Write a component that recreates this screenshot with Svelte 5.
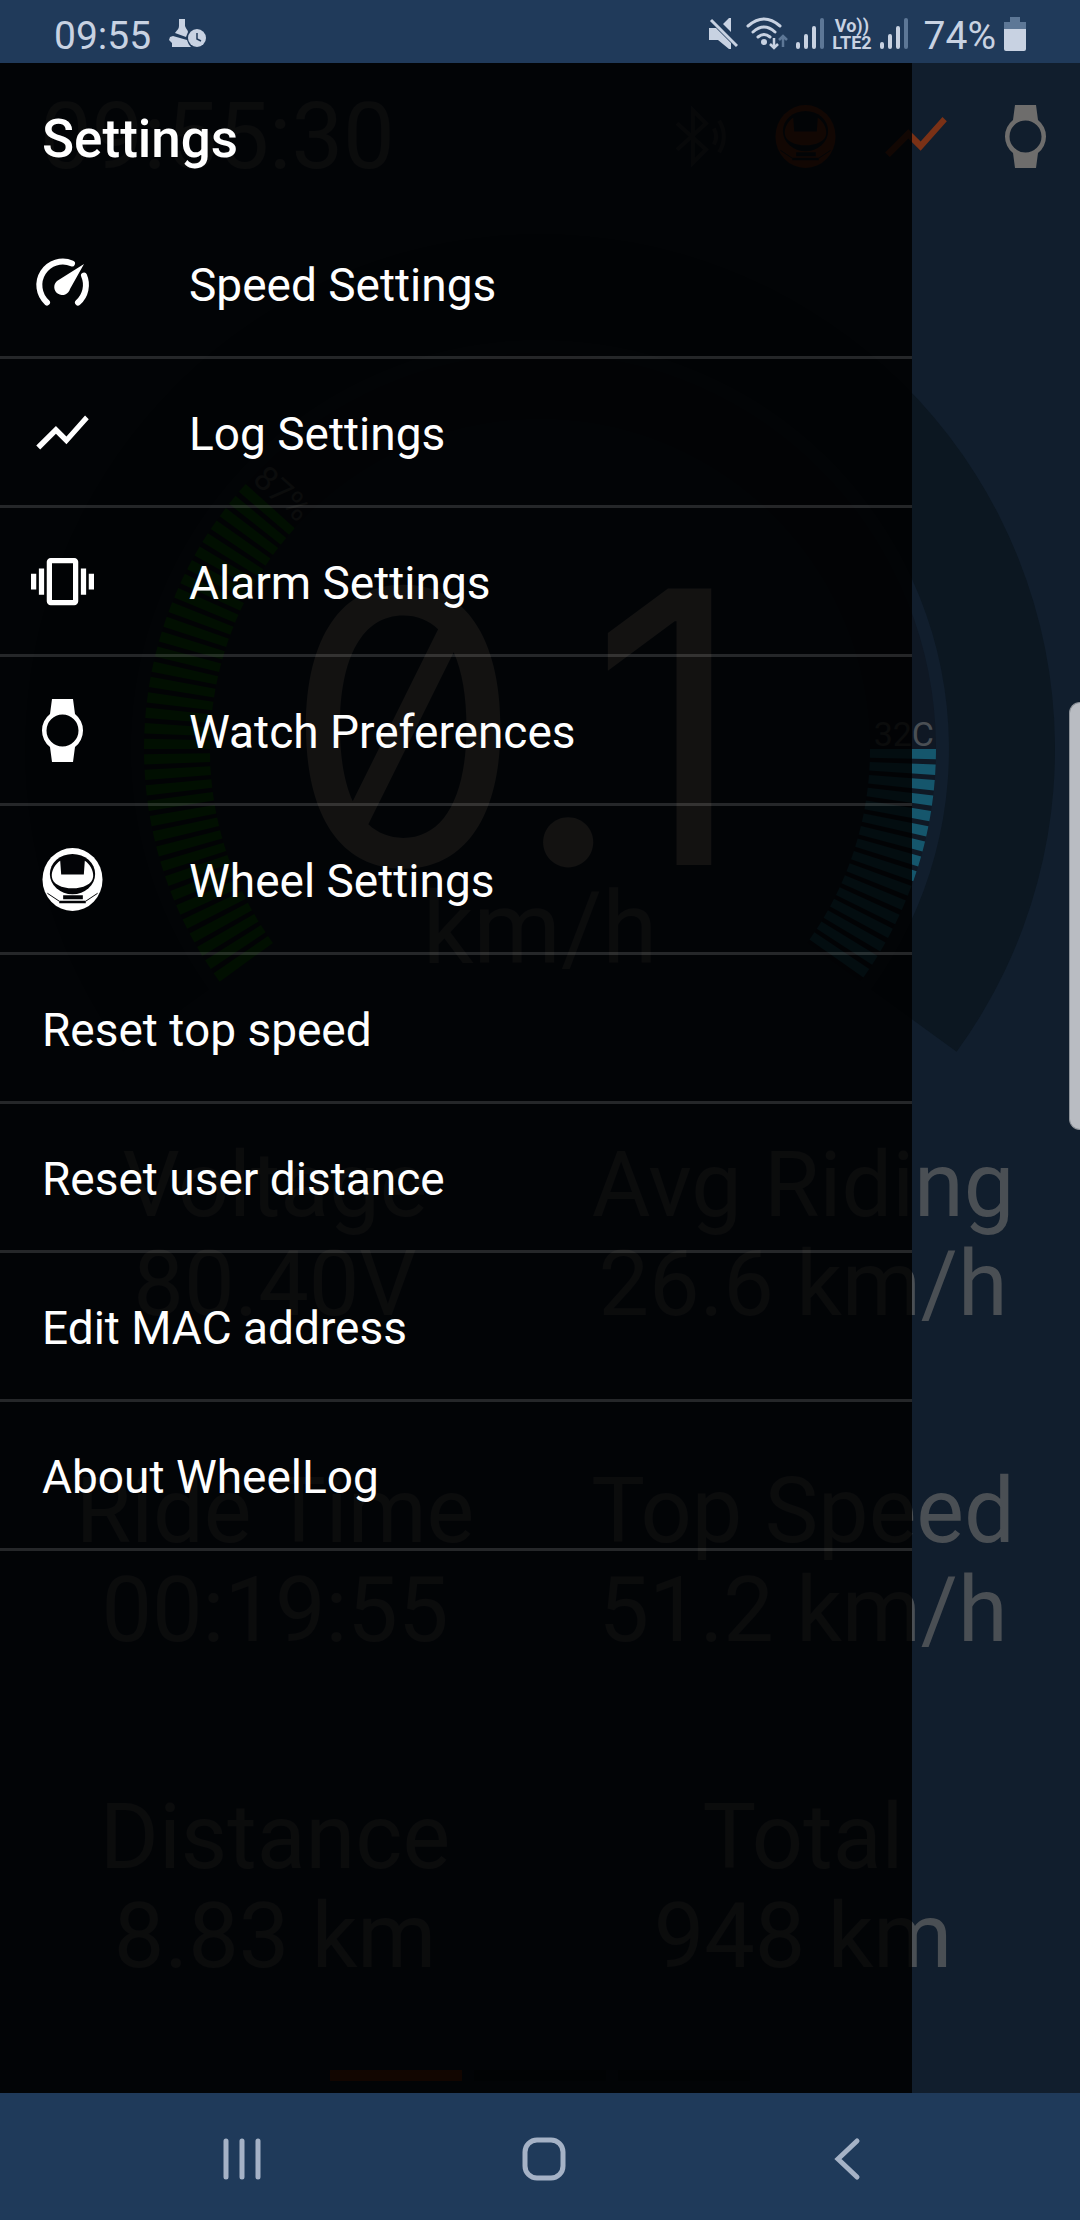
<script lang="ts">
    type IconName = 'speed' | 'chart' | 'vibrate' | 'watch' | 'wheel'

    interface MenuItem {
        label: string
        icon?: IconName
    }

    const menu: MenuItem[] = [
        { label: 'Speed Settings', icon: 'speed' },
        { label: 'Log Settings', icon: 'chart' },
        { label: 'Alarm Settings', icon: 'vibrate' },
        { label: 'Watch Preferences', icon: 'watch' },
        { label: 'Wheel Settings', icon: 'wheel' },
        { label: 'Reset top speed' },
        { label: 'Reset user distance' },
        { label: 'Edit MAC address' },
        { label: 'About WheelLog' },
    ]

    const stats = [
        { label: 'Voltage', value: '80.40V' },
        { label: 'Avg Riding', value: '26.6 km/h' },
        { label: 'Ride Time', value: '00:19:55' },
        { label: 'Top Speed', value: '51.2 km/h' },
        { label: 'Distance', value: '8.83 km' },
        { label: 'Total', value: '948 km' },
    ]

    // Gauge geometry, in viewBox units
    const CX = 540
    const CY = 539
    const BAR_STEP = 2.25
    const BAR_SWEEP = 1.5
    const SWEEP_END = 36

    function point(r: number, deg: number): string {
        const a = (deg * Math.PI) / 180
        return `${(CX + r * Math.cos(a)).toFixed(2)} ${(CY + r * Math.sin(a)).toFixed(2)}`
    }

    // Ring segment between two radii, angles clockwise from 3 o'clock
    function ring(r1: number, r2: number, from: number, to: number): string {
        const large = to - from > 180 ? 1 : 0
        return (
            `M${point(r2, from)}A${r2} ${r2} 0 ${large} 1 ${point(r2, to)}` +
            `L${point(r1, to)}A${r1} ${r1} 0 ${large} 0 ${point(r1, from)}Z`
        )
    }

    function bars(start: number, count: number): string[] {
        return Array.from({ length: count }, (_, i) => {
            const a = start + i * BAR_STEP
            return ring(330, 396, a, a + BAR_SWEEP)
        })
    }

    const batteryBars = bars(180 - SWEEP_END, 35)
    const tempBars = bars(0, 16)
</script>

{#snippet icon(name: IconName)}
    {#if name === 'speed'}
        <svg class="icon" viewBox="0 0 63 63" aria-hidden="true">
            <path
                d="M16 50.5A23.5 23.5 0 0 1 41 11.5M53 23.5A23.5 23.5 0 0 1 47 50.5"
                fill="none"
                stroke="currentColor"
                stroke-width="6"
                stroke-linecap="round"
            />
            <path d="M53 12L39 37A8 8 0 1 1 26 29Z" fill="currentColor" />
        </svg>
    {:else if name === 'chart'}
        <svg class="icon chart" viewBox="0 0 24 24" aria-hidden="true">
            <path
                d="M3.5 18.49l6-6.01 4 4L22 6.92l-1.41-1.41-7.09 7.97-4-4L2 16.99z"
                fill="currentColor"
            />
        </svg>
    {:else if name === 'vibrate'}
        <svg class="icon" viewBox="0 0 24 24" aria-hidden="true">
            <path
                d="M0 15h2V9H0v6zm3 2h2V7H3v10zm19-8v6h2V9h-2zm-3 8h2V7h-2v10zM16.5 3h-9C6.67 3 6 3.67 6 4.5v15c0 .83.67 1.5 1.5 1.5h9c.83 0 1.5-.67 1.5-1.5v-15c0-.83-.67-1.5-1.5-1.5zM16 19H8V5h8v14z"
                fill="currentColor"
            />
        </svg>
    {:else if name === 'watch'}
        <svg class="icon" viewBox="0 0 63 63" aria-hidden="true">
            <path
                fill-rule="evenodd"
                d="M21 0H42L44 15A21 21 0 0 1 44 48L42 63H21L19 48A21 21 0 0 1 19 15ZM31.5 15.5a16 16 0 1 0 0 32a16 16 0 1 0 0-32Z"
                fill="currentColor"
            />
        </svg>
    {:else}
        <svg class="icon" viewBox="0 0 61 64" aria-hidden="true">
            <ellipse cx="30.5" cy="32" rx="30.5" ry="32" fill="currentColor" />
            <ellipse cx="30.5" cy="26.5" rx="23" ry="20.5" fill="var(--hole)" />
            <path
                d="M18 13C13 16 9 23 9.500 29C10 37 20 41 30.500 41S51 37 51.500 29C52 23 48 16 43 13L42 27H19Z"
                fill="currentColor"
            />
            <path
                d="M5 46L17 54M56 46L44 54"
                fill="none"
                stroke="var(--hole)"
                stroke-width="1"
            />
            <path d="M21 48H41V52H21ZM17 53.500H44V56H17Z" fill="var(--hole)" />
        </svg>
    {/if}
{/snippet}

{#snippet signal()}
    <svg width="28" height="31" viewBox="0 0 28 31" aria-hidden="true">
        <path
            d="M2 26v3M10 18v11M18 10v19"
            stroke="currentColor"
            stroke-width="4"
            stroke-linecap="round"
        />
        <path
            d="M26 2v27"
            stroke="#5d7796"
            stroke-width="4"
            stroke-linecap="round"
        />
    </svg>
{/snippet}

<div class="phone">
    <header class="status">
        <span class="status-text">09:55</span>
        <svg class="steps" width="37" height="29" viewBox="0 0 37 29" aria-hidden="true">
            <path
                d="M10 0H16V7C17 10 19 11 19 13L17 18L6 14C8 11 10 10 10 7ZM1 18L4 17L18 21C19 24 20 26 22 28H3V24L0 21Z"
                fill="currentColor"
            />
            <circle cx="28" cy="19" r="9" fill="currentColor" />
            <path d="M28 14v6l4 2" fill="none" stroke="#203a5a" stroke-width="1.5" />
        </svg>
        <div class="status-right">
            <svg width="29" height="33" viewBox="0 0 29 33" aria-hidden="true">
                <path
                    d="M0 11H7L22 26V32H20L9 23H0ZM14 7L20 1H22V15Z"
                    fill="currentColor"
                />
                <path d="M2 3L28 29" stroke="currentColor" stroke-width="3" />
            </svg>
            <svg width="42" height="33" viewBox="0 0 42 33" aria-hidden="true">
                <path
                    d="M2 9Q18-5 34 9M7 15Q18 5 29 15M12 20Q18 15 24 20"
                    fill="none"
                    stroke="currentColor"
                    stroke-width="3"
                    stroke-linecap="round"
                />
                <circle cx="18" cy="25" r="3" fill="currentColor" />
                <path
                    d="M28 21v10M24 27l4 4 4-4"
                    fill="none"
                    stroke="currentColor"
                    stroke-width="2.5"
                />
                <path
                    d="M37 30V19M33 23l4-4 4 4"
                    fill="none"
                    stroke="#5d7796"
                    stroke-width="2.5"
                />
            </svg>
            {@render signal()}
            <span class="volte"><span>Vo))</span><span>LTE2</span></span>
            {@render signal()}
            <span class="status-text percent">74%</span>
            <svg width="22" height="34" viewBox="0 0 22 34" aria-hidden="true">
                <path d="M6 0H16V5H22V13H0V5H6Z" fill="#5d7796" />
                <path d="M0 12H22V32Q22 34 20 34H2Q0 34 0 32Z" fill="currentColor" />
            </svg>
        </div>
    </header>

    <main>
        <section class="dashboard">
            <div class="toolbar">
                <span class="clock">09:55:30</span>
                <div class="actions">
                    <button class="bt" aria-label="Bluetooth">
                        <svg class="icon" viewBox="0 0 24 24" aria-hidden="true">
                            <path
                                d="M5 7l11 10-5 5V2l5 5L5 17M19 9a6 6 0 0 1 0 6M21 6a11 11 0 0 1 0 12"
                                fill="none"
                                stroke="currentColor"
                                stroke-width="1.5"
                            />
                        </svg>
                    </button>
                    <button class="on" aria-label="Wheel">{@render icon('wheel')}</button>
                    <button class="on" aria-label="Log">{@render icon('chart')}</button>
                    <button aria-label="Watch">{@render icon('watch')}</button>
                </div>
            </div>

            <svg class="gauge" viewBox="0 0 1080 926" role="img" aria-label="Speed 0.1 km/h">
                <path
                    d={ring(409, 515, -180 - SWEEP_END, SWEEP_END)}
                    fill="#0c1721"
                />
                <path
                    d={ring(330, 396, -180 - SWEEP_END, SWEEP_END)}
                    fill="#0f1824"
                />
                {#each batteryBars as d}
                    <path {d} fill="#0a640a" />
                {/each}
                {#each tempBars as d}
                    <path {d} fill="#15566c" />
                {/each}
                <text class="speed" x="514" y="655" text-anchor="middle">0.1</text>
                <text class="unit" x="540" y="753" text-anchor="middle">km/h</text>
                <text class="mark" x="934" y="536" text-anchor="end">32C</text>
                <text class="mark" x="146" y="533" transform="rotate(42 {CX} {CY})">87%</text>
            </svg>

            <dl class="stats">
                {#each stats as { label, value }}
                    <div>
                        <dt>{label}</dt>
                        <dd>{value}</dd>
                    </div>
                {/each}
            </dl>

            <div class="pages">
                <span class="current"></span>
                <span></span>
                <span></span>
            </div>
        </section>

        <aside class="drawer">
            <h1>Settings</h1>
            <ul>
                {#each menu as item}
                    <li>
                        <button class:with-icon={item.icon}>
                            {#if item.icon}
                                <span class="slot {item.icon}">{@render icon(item.icon)}</span>
                            {/if}
                            <span class="label">{item.label}</span>
                        </button>
                    </li>
                {/each}
            </ul>
        </aside>

        <div class="edge-handle"></div>
    </main>

    <nav>
        <button aria-label="Recent apps">
            <svg width="44" height="44" viewBox="0 0 44 44" aria-hidden="true">
                <path
                    d="M6 4v36M22 4v36M38 4v36"
                    stroke="currentColor"
                    stroke-width="5"
                    stroke-linecap="round"
                />
            </svg>
        </button>
        <button aria-label="Home">
            <svg width="44" height="44" viewBox="0 0 44 44" aria-hidden="true">
                <rect
                    x="3"
                    y="3"
                    width="38"
                    height="38"
                    rx="12"
                    fill="none"
                    stroke="currentColor"
                    stroke-width="5"
                />
            </svg>
        </button>
        <button aria-label="Back">
            <svg width="44" height="44" viewBox="0 0 44 44" aria-hidden="true">
                <path
                    d="M33 4L14 22L33 40"
                    fill="none"
                    stroke="currentColor"
                    stroke-width="5"
                    stroke-linecap="round"
                />
            </svg>
        </button>
    </nav>
</div>

<style>
    :global(body) {
        margin: 0;
        background: #203a5a;
    }

    .phone {
        display: flex;
        flex-direction: column;
        min-height: 100vh;
        font-family: Roboto, sans-serif;
    }

    button {
        padding: 0;
        border: none;
        background: none;
        color: inherit;
        font: inherit;
        cursor: pointer;
    }

    svg {
        display: block;
    }

    .icon {
        width: 63px;
        height: 63px;
    }

    /* Status bar */
    .status {
        display: flex;
        align-items: center;
        box-sizing: border-box;
        height: 63px;
        padding: 4px 54px 0 54px;
        background: #203a5a;
        color: #c8d2e2;
    }
    .status-text {
        font-size: 39px;
        line-height: 44px;
        padding-top: 4px;
    }
    .steps {
        margin-left: 18px;
    }
    .status-right {
        display: flex;
        align-items: center;
        gap: 8px;
        margin-left: auto;
    }
    .volte {
        display: flex;
        flex-direction: column;
        align-items: center;
        font-size: 18px;
        font-weight: 700;
        line-height: 17px;
    }
    .percent {
        margin-left: 8px;
    }

    /* Dashboard behind the drawer */
    main {
        position: relative;
        flex: 1;
        display: flex;
        overflow: hidden;
    }
    .dashboard {
        --hole: #111e2d;
        flex: 1;
        display: flex;
        flex-direction: column;
        min-width: 0;
        background: #111e2d;
        color: #4a4f54;
    }
    .toolbar {
        display: flex;
        align-items: center;
        justify-content: space-between;
        height: 147px;
        padding: 0 23px 0 40px;
    }
    .clock {
        font-size: 92px;
        line-height: 99px;
    }
    .actions {
        display: flex;
        gap: 47px;
        color: #6e6d6c;
    }
    .actions button {
        display: flex;
        align-items: center;
        justify-content: center;
        width: 63px;
        height: 63px;
    }
    .actions .on {
        color: #7a3116;
    }
    .actions .bt {
        color: #333a41;
    }
    .actions .on :global(.chart) {
        flex: none;
        width: 74px;
        height: 74px;
    }
    .gauge {
        width: 100%;
    }
    .gauge text {
        fill: #4a4f54;
    }
    .gauge .speed {
        font-family: Inter, sans-serif;
        font-feature-settings: 'zero';
        font-size: 380px;
        fill: #7d7a74;
    }
    .gauge .unit {
        font-size: 100px;
    }
    .gauge .mark {
        font-size: 34px;
    }
    .stats {
        display: grid;
        grid-template-columns: 1fr 1fr;
        row-gap: 128px;
        margin: 0;
        padding: 0 13px 0 11px;
        font-size: 90px;
        line-height: 99px;
        text-align: center;
        white-space: nowrap;
    }
    .stats dd {
        margin: 0;
    }
    .pages {
        display: flex;
        justify-content: center;
        gap: 12px;
        margin-top: auto;
        padding-bottom: 12px;
    }
    .pages span {
        width: 132px;
        height: 11px;
        background: #0c1520;
    }
    .pages .current {
        background: #7a2808;
    }

    /* Drawer */
    .drawer {
        --hole: #030407;
        position: absolute;
        inset: 0 auto 0 0;
        width: 84.45%;
        background: rgba(0, 0, 0, 0.85);
        color: #fff;
    }
    h1 {
        margin: 0;
        padding: 6px 0 0 42px;
        font-size: 53px;
        font-weight: 500;
        line-height: 141px;
    }
    ul {
        margin: 0;
        padding: 0;
        list-style: none;
    }
    li {
        border-bottom: 3px solid rgba(255, 255, 255, 0.14);
    }
    li button {
        display: flex;
        align-items: center;
        width: 100%;
        height: 146px;
        padding-left: 42px;
        font-size: 46px;
        text-align: left;
    }
    li .slot {
        flex: 0 0 158px;
    }
    li .with-icon {
        padding-left: 31px;
    }
    .label {
        padding-top: 4px;
    }
    .slot.wheel {
        box-sizing: border-box;
        padding-left: 10px;
    }

    .edge-handle {
        position: absolute;
        top: 639px;
        right: 0;
        box-sizing: border-box;
        width: 11px;
        height: 428px;
        border: 1px solid #8b9097;
        border-right: none;
        border-radius: 11px 0 0 11px;
        background: #b9bcc2;
    }

    /* System navigation */
    nav {
        display: grid;
        grid-template-columns: repeat(3, 1fr);
        box-sizing: border-box;
        height: 127px;
        padding: 4px 83px 0 91px;
        background: #1f3a5a;
        color: #a5b2c6;
    }
    nav button {
        display: flex;
        align-items: center;
        justify-content: center;
    }
</style>
